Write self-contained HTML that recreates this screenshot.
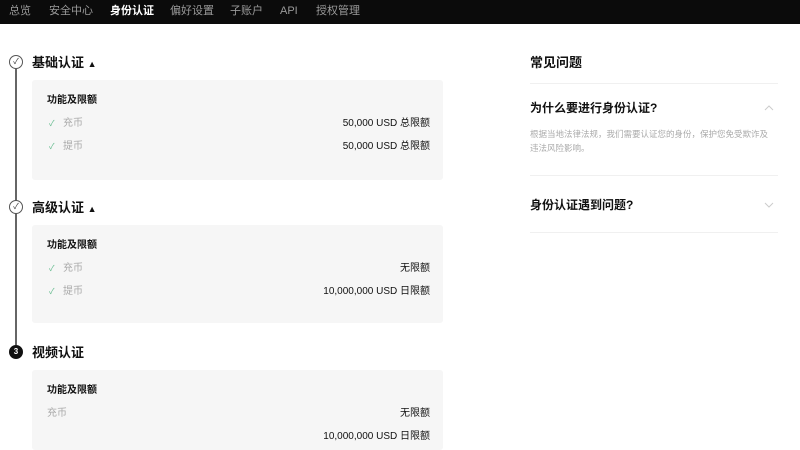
<!DOCTYPE html>
<html><head><meta charset="utf-8"><style>
*{margin:0;padding:0;box-sizing:border-box}
body{width:800px;height:448px;overflow:hidden;background:#fff;font-family:"Liberation Sans","Noto Sans CJK SC",sans-serif;color:#111;position:relative}
.nav{position:absolute;left:0;top:0;width:800px;height:24px;background:#0b0b0b}
.nav span{position:absolute;top:4px;font-size:11px;color:#9a9a9a;line-height:14px}
.nav span.a{color:#fff;font-weight:bold}
.abs{position:absolute;white-space:nowrap}
.line{position:absolute;left:15px;top:69px;width:1.5px;height:276px;background:#666}
.circ{position:absolute;left:9px;width:14px;height:14px;border-radius:50%;border:1.3px solid #555;background:#fff;font-size:8px;text-align:center;line-height:11px;color:#333}
.t{font-size:13px;font-weight:bold;left:32px;line-height:16px}
.card{position:absolute;left:32px;width:411px;background:#f6f6f6;border-radius:3px}
.ch{font-size:10px;font-weight:bold;left:47px;line-height:12px}
.g{font-size:10px;color:#aaa;line-height:12px;position:absolute;left:63px}
.ck{font-size:8px;color:#5fb98a;left:49px;line-height:12px}
.r{font-size:10px;right:370px;line-height:12px;color:#111}
.hr{position:absolute;left:530px;width:248px;height:1px;background:#f0f0f0}
</style></head><body>
<div class="nav">
<span style="left:9px">总览</span><span style="left:49px">安全中心</span><span class="a" style="left:110px">身份认证</span><span style="left:170px">偏好设置</span><span style="left:230px">子账户</span><span style="left:280px">API</span><span style="left:316px">授权管理</span>
</div>
<div class="line"></div>
<div class="circ" style="top:55px">✓</div>
<div class="circ" style="top:200px">✓</div>
<div class="circ" style="top:345px;background:#111;border-color:#111;color:#fff;font-weight:bold">3</div>
<div class="abs t" style="top:55px">基础认证 <span style="font-size:9px">▲</span></div>
<div class="abs t" style="top:200px">高级认证 <span style="font-size:9px">▲</span></div>
<div class="abs t" style="top:345px">视频认证</div>

<div class="card" style="top:80px;height:100px"></div>
<div class="abs ch" style="top:95px">功能及限额</div>
<div class="abs ck" style="top:118px">✓</div><div class="g" style="top:118px">充币</div>
<div class="abs ck" style="top:141px">✓</div><div class="g" style="top:141px">提币</div>
<div class="abs r" style="top:118px">50,000 USD 总限额</div>
<div class="abs r" style="top:141px">50,000 USD 总限额</div>

<div class="card" style="top:225px;height:98px"></div>
<div class="abs ch" style="top:240px">功能及限额</div>
<div class="abs ck" style="top:263px">✓</div><div class="g" style="top:263px">充币</div>
<div class="abs ck" style="top:286px">✓</div><div class="g" style="top:286px">提币</div>
<div class="abs r" style="top:263px">无限额</div>
<div class="abs r" style="top:286px">10,000,000 USD 日限额</div>

<div class="card" style="top:370px;height:80px"></div>
<div class="abs ch" style="top:385px">功能及限额</div>
<div class="g" style="top:408px;left:47px">充币</div>
<div class="abs r" style="top:408px">无限额</div>
<div class="abs r" style="top:431px">10,000,000 USD 日限额</div>

<div class="abs" style="left:530px;top:55px;font-size:13px;font-weight:bold;line-height:16px">常见问题</div>
<div class="hr" style="top:83px"></div>
<div class="abs" style="left:530px;top:101px;font-size:12px;font-weight:bold;line-height:15px">为什么要进行身份认证?</div>
<svg class="abs" style="left:764px;top:105px" width="10" height="6"><path d="M1 5L5 1L9 5" fill="none" stroke="#ccc" stroke-width="1"/></svg>
<div class="abs" style="left:530px;top:127px;font-size:8.5px;color:#aaa;line-height:14px">根据当地法律法规，我们需要认证您的身份，保护您免受欺诈及<br>违法风险影响。</div>
<div class="hr" style="top:175px"></div>
<div class="abs" style="left:530px;top:198px;font-size:12px;font-weight:bold;line-height:15px">身份认证遇到问题?</div>
<svg class="abs" style="left:764px;top:202px" width="10" height="6"><path d="M1 1L5 5L9 1" fill="none" stroke="#ccc" stroke-width="1"/></svg>
<div class="hr" style="top:232px"></div>
</body></html>
